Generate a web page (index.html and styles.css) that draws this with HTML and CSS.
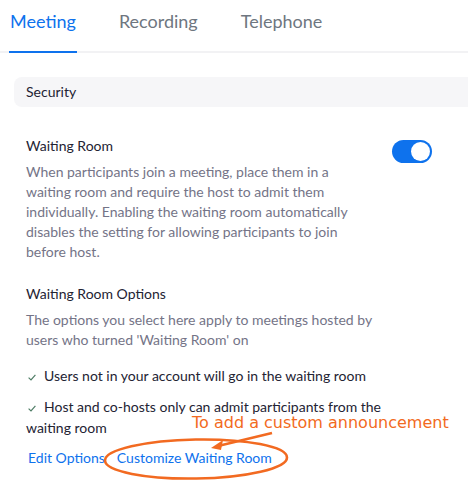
FILE: index.html
```html
<!DOCTYPE html>
<html lang="en">
<head>
    <meta charset="UTF-8">
    <meta name="viewport" content="width=device-width, initial-scale=1.0">
    <title>Meeting Settings</title>
    <link rel="stylesheet" href="styles.css">
</head>
<body>
    <div class="tabs">
        <div class="tab active">Meeting</div>
        <div class="tab">Recording</div>
        <div class="tab">Telephone</div>
    </div>

    <div class="group-bar">Security</div>

    <div class="setting">
        <div class="setting-row">
            <div class="setting-text">
                <div class="setting-title">Waiting Room</div>
                <p class="setting-desc narrow">When participants join a meeting, place them in a waiting room and require the host to admit them individually. Enabling the waiting room automatically disables the setting for allowing participants to join before host.</p>
            </div>
            <div class="toggle on"><span class="knob"></span></div>
        </div>

        <div class="setting-title options-title">Waiting Room Options</div>
        <p class="setting-desc">The options you select here apply to meetings hosted by users who turned 'Waiting Room' on</p>

        <ul class="checks">
            <li><svg class="check" width="8" height="7" viewBox="0 0 8 7"><path d="M0.6 3.6 L3 5.9 L7.4 0.9" fill="none" stroke="#4f7d66" stroke-width="1.2"/></svg>Users not in your account will go in the waiting room</li>
            <li><svg class="check" width="8" height="7" viewBox="0 0 8 7"><path d="M0.6 3.6 L3 5.9 L7.4 0.9" fill="none" stroke="#4f7d66" stroke-width="1.2"/></svg>Host and co-hosts only can admit participants from the waiting room</li>
        </ul>

        <div class="links">
            <a href="#">Edit Options</a>
            <a href="#">Customize Waiting Room</a>
        </div>
    </div>

    <!-- annotation drawn over the screenshot -->
    <div class="note">To add a custom announcement</div>
    <svg class="note-marks" width="468" height="496" viewBox="0 0 468 496">
        <ellipse cx="196" cy="459" rx="91" ry="19.5" fill="none" stroke="#f26a21" stroke-width="2.6" transform="rotate(-1 196 459)"/>
        <line x1="272" y1="433" x2="218" y2="446" stroke="#f26a21" stroke-width="2.5"/>
        <path d="M211 448 L223 440 L221 450 Z" fill="#f26a21"/>
    </svg>
</body>
</html>
```

FILE: styles.css
```css
body {
    margin: 0;
    font-family: Lato, "Open Sans", sans-serif;
    color: #232333;
    background: #fff;
    position: relative;
    width: 468px;
    height: 496px;
    overflow: hidden;
}

.tabs {
    display: flex;
    gap: 41px;
    padding-left: 9px;
    border-bottom: 2px solid #f2f2f4;
}

.tab {
    font-size: 18px;
    line-height: 26px;
    padding: 8px 1px 17px;
    margin-bottom: -2px;
    color: #6e7680;
    border-bottom: 2px solid transparent;
}

.tab.active {
    color: #0e72ed;
    border-bottom-color: #0e72ed;
}

.group-bar {
    margin: 24px 0 0 14px;
    height: 30px;
    line-height: 30px;
    padding-left: 12px;
    font-size: 14px;
    background: #f6f6f8;
    border-radius: 8px 0 0 8px;
}

.setting {
    padding: 29px 36px 0 26px;
}

.setting-row {
    display: flex;
    justify-content: space-between;
    align-items: flex-start;
}

.setting-title {
    font-size: 14px;
    line-height: 20px;
}

.setting-desc {
    margin: 6px 0 0;
    width: 352px;
    font-size: 14px;
    line-height: 20px;
    color: #747487;
}

.setting-desc.narrow {
    width: 324px;
}

.options-title {
    margin-top: 22px;
}

.toggle {
    width: 40px;
    height: 23px;
    margin-top: 4px;
    border-radius: 12px;
    background: #0e72ed;
    display: flex;
    align-items: center;
    justify-content: flex-end;
    padding: 0 2px;
    box-sizing: border-box;
}

.knob {
    width: 19px;
    height: 19px;
    border-radius: 50%;
    background: #fff;
}

.checks {
    list-style: none;
    margin: 15px 0 0;
    padding: 0;
    width: 360px;
}

.checks li {
    font-size: 14px;
    line-height: 21px;
    margin-bottom: 10px;
}

.check {
    margin: 0 8px 0 2px;
}

.links {
    display: flex;
    gap: 12px;
    margin-top: 1px;
    padding-left: 2px;
    font-size: 14px;
    line-height: 20px;
}

.links a {
    color: #0e72ed;
    text-decoration: none;
}

.note {
    position: absolute;
    left: 192px;
    top: 417px;
    font-family: "DejaVu Sans", Verdana, sans-serif;
    font-size: 16px;
    line-height: 12px;
    color: #f26a21;
    white-space: nowrap;
}

.note-marks {
    position: absolute;
    left: 0;
    top: 0;
    pointer-events: none;
}
```
